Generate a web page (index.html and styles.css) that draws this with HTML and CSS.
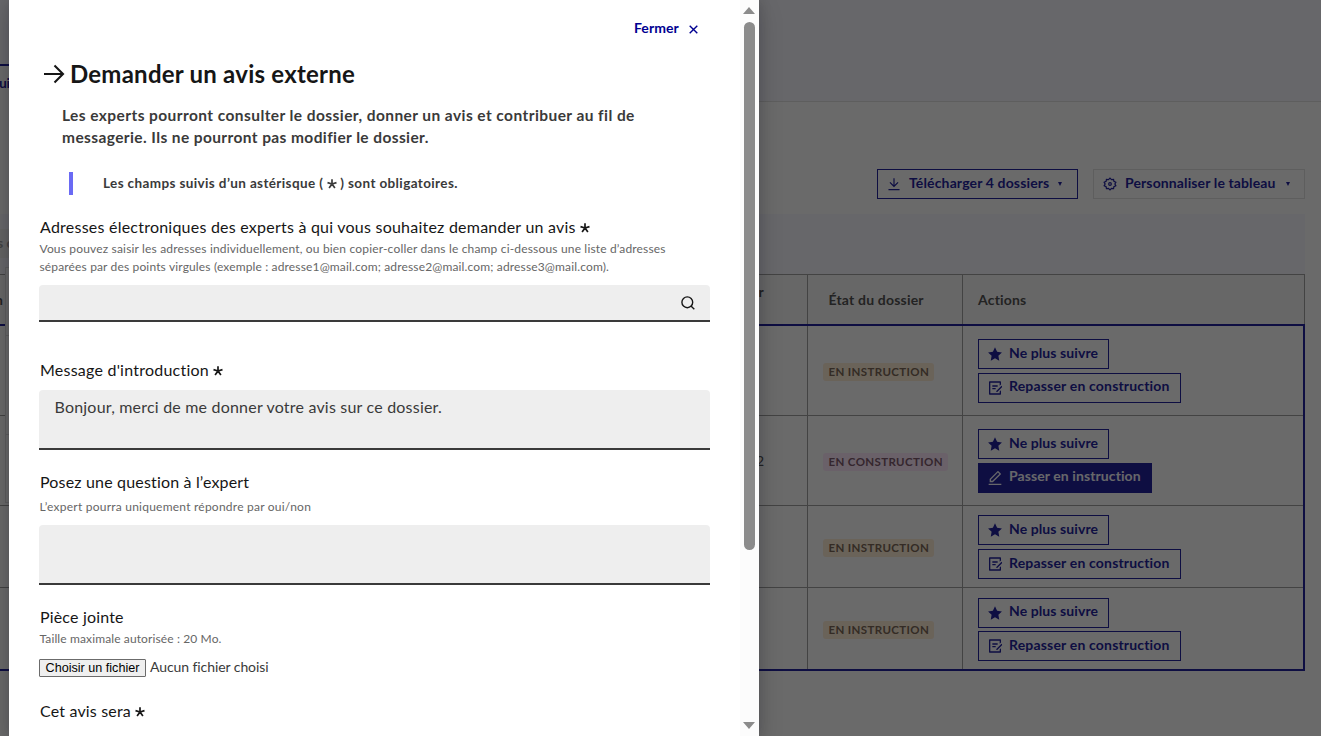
FILE: index.html
```html
<!DOCTYPE html>
<html lang="fr">
<head>
<meta charset="utf-8">
<title>Demander un avis externe</title>
<link rel="stylesheet" href="styles.css">
</head>
<body>
<svg class="defs" width="0" height="0">
  <symbol id="star" viewBox="0 0 24 24"><path d="M12 .6l3.600 7.600 8.300 1.100-6.100 5.800 1.500 8.300-7.300-4-7.300 4 1.500-8.300L.1 9.300l8.300-1.100z"/></symbol>
  <symbol id="draft" viewBox="1.500 1.500 21 21"><path d="M20 2a1 1 0 0 1 1 1v3.800l-2 2V4H5v16h14v-2.800l2-2V21a1 1 0 0 1-1 1H4a1 1 0 0 1-1-1V3a1 1 0 0 1 1-1zm1.800 6.800 1.400 1.400-7.800 7.800H14v-1.400zM13 12v2H8v-2zm3-4v2H8V8z"/></symbol>
  <symbol id="pencil" viewBox="1.500 1.500 21 21"><path d="M15.700 1.700a1 1 0 0 1 1.400 0l3.500 3.500a1 1 0 0 1 0 1.400L8.800 18.300H4v-4.900zM16.400 3.800 6 14.200v2.100h2.100L18.500 5.900zM2.500 20.500h19v2h-19z"/></symbol>
  <symbol id="asterisk" viewBox="0 0 10 10"><path d="M5 5V.3M5 5l4.500-1.400M5 5l2.900 4.100M5 5L2.100 9.100M5 5L.5 3.600" fill="none" stroke="currentColor" stroke-width="1.700"/></symbol>
</svg>

<div class="page">
  <header class="banner"><div class="tab">ui</div></header>
  <div class="toolbar">
    <button class="btn btn-tool">
      <svg class="ico" viewBox="0 0 24 24"><path d="M2.500 20.500h19v2h-19zM13 13.600l5.200-5.200 1.500 1.500L12 17.600 4.300 9.900l1.500-1.500 5.200 5.200V2h2z"/></svg>
      <span>Télécharger 4 dossiers</span><i class="caret"></i>
    </button>
    <button class="btn btn-tool btn-light">
      <svg class="ico" viewBox="0 0 24 24"><path d="M12 2l2.600 2.500 3.500-.5.600 3.500 3.300 1.600L20.400 12l1.600 2.900-3.300 1.600-.6 3.500-3.500-.5L12 22l-2.600-2.500-3.500.5-.6-3.500L2 14.900 3.600 12 2 9.100l3.300-1.600L5.900 4l3.500.5z" fill="none" stroke="currentColor" stroke-width="2.100"/><circle cx="12" cy="12" r="2.300" fill="none" stroke="currentColor" stroke-width="2"/></svg>
      <span>Personnaliser le tableau</span><i class="caret"></i>
    </button>
  </div>
  <div class="filters"><span class="tag">s c</span></div>
  <div class="table">
    <div class="row head">
      <div class="cell first"><span>n</span><span>r</span></div>
      <div class="cell state">État du dossier</div>
      <div class="cell">Actions</div>
    </div>
    <div class="rows">
      <div class="row r1">
        <div class="cell first"></div>
        <div class="cell"><span class="badge">EN INSTRUCTION</span></div>
        <div class="cell actions">
          <button class="btn"><svg class="ico"><use href="#star"/></svg><span>Ne plus suivre</span></button>
          <button class="btn b-long raised"><svg class="ico"><use href="#draft"/></svg><span>Repasser en construction</span></button>
        </div>
      </div>
      <div class="row r2">
        <div class="cell first"><span></span><span>2</span></div>
        <div class="cell"><span class="badge pink">EN CONSTRUCTION</span></div>
        <div class="cell actions">
          <button class="btn"><svg class="ico"><use href="#star"/></svg><span>Ne plus suivre</span></button>
          <button class="btn b-primary raised"><svg class="ico"><use href="#pencil"/></svg><span>Passer en instruction</span></button>
        </div>
      </div>
      <div class="row r3">
        <div class="cell first"></div>
        <div class="cell"><span class="badge">EN INSTRUCTION</span></div>
        <div class="cell actions">
          <button class="btn"><svg class="ico"><use href="#star"/></svg><span>Ne plus suivre</span></button>
          <button class="btn b-long"><svg class="ico"><use href="#draft"/></svg><span>Repasser en construction</span></button>
        </div>
      </div>
      <div class="row r4">
        <div class="cell first"></div>
        <div class="cell"><span class="badge">EN INSTRUCTION</span></div>
        <div class="cell actions">
          <button class="btn raised"><svg class="ico"><use href="#star"/></svg><span>Ne plus suivre</span></button>
          <button class="btn b-long"><svg class="ico"><use href="#draft"/></svg><span>Repasser en construction</span></button>
        </div>
      </div>
    </div>
  </div>
  <div class="popover"><i></i><i></i></div>
</div>

<div class="overlay">
  <section class="modal">
    <div class="content">
      <div class="close"><span>Fermer</span><svg width="9" height="9" viewBox="0 0 9 9"><path d="M.7.700l7.600 7.600M8.300.700L.7 8.300" stroke="currentColor" stroke-width="1.400"/></svg></div>
      <h1 class="title"><svg width="21" height="20" viewBox="0 0 21 20"><path d="M0 10h19M10.500 1.500l8.500 8.500-8.500 8.500" fill="none" stroke="currentColor" stroke-width="2.100"/></svg><span>Demander un avis externe</span></h1>
      <p class="lead">Les experts pourront consulter le dossier, donner un avis et contribuer au fil de<br><span class="lead-end">messagerie. Ils ne pourront pas modifier le dossier.</span></p>
      <p class="notice"><span>Les champs suivis d’un astérisque (</span><svg class="ast"><use href="#asterisk"/></svg><span>) sont obligatoires.</span></p>
      <div class="label"><span>Adresses électroniques des experts à qui vous souhaitez demander un avis</span><svg class="ast"><use href="#asterisk"/></svg></div>
      <p class="hint">Vous pouvez saisir les adresses individuellement, ou bien copier-coller dans le champ ci-dessous une liste d’adresses<br><span class="hint-end">séparées par des points virgules (exemple : adresse1@mail.com; adresse2@mail.com; adresse3@mail.com).</span></p>
      <div class="field search"><svg width="14" height="14" viewBox="0 0 14 14"><circle cx="6.300" cy="6.300" r="5.400" fill="none" stroke="currentColor" stroke-width="1.400"/><path d="M10 10l3.300 3.300" stroke="currentColor" stroke-width="1.400"/></svg></div>
      <div class="label l2"><span>Message d'introduction</span><svg class="ast"><use href="#asterisk"/></svg></div>
      <div class="field area">Bonjour, merci de me donner votre avis sur ce dossier.</div>
      <div class="label l3"><span>Posez une question à l’expert</span></div>
      <p class="hint h3">L’expert pourra uniquement répondre par oui/non</p>
      <div class="field area a3"></div>
      <div class="label l4"><span>Pièce jointe</span></div>
      <p class="hint h4">Taille maximale autorisée : 20 Mo.</p>
      <div class="file"><button>Choisir un fichier</button><span>Aucun fichier choisi</span></div>
      <div class="label l5"><span>Cet avis sera</span><svg class="ast"><use href="#asterisk"/></svg></div>
    </div>
    <div class="scrollbar"><i class="up"></i><i class="thumb"></i><i class="down"></i></div>
  </section>
</div>
</body>
</html>
```
FILE: styles.css
```css
* { box-sizing: border-box; }
body { margin: 0; height: 736px; overflow: hidden; background: #fff; color: #3a3a3a; font: 14px/22px Lato, "Open Sans", sans-serif; }
p, h1 { margin: 0; }
.defs { position: absolute; }
button { font: inherit; }

.page { height: 736px; }
.banner { height: 102px; background: #f5f5fe; border-bottom: 1px solid #ddd; padding-top: 64px; }
.tab { width: 60px; height: 38px; background: #fff; border-top: 2px solid #000091; color: #000091; font-weight: 700; padding-top: 6px; letter-spacing: -.3px; text-indent: -1px; }
.toolbar { display: flex; justify-content: flex-end; gap: 15px; padding: 67px 16px 15px 0; }
.btn { display: flex; align-items: center; width: 131px; height: 30px; margin: 0; padding: 0 0 2px 9px; border: 1px solid #000091; background: none; color: #000091; font-weight: 700; letter-spacing: .09px; white-space: nowrap; }
.ico { width: 14px; height: 14px; margin: 2px 7.500px 0 0; fill: currentColor; flex: none; }
.actions .ico { margin-left: -.5px; }
.btn-tool { width: 201px; letter-spacing: .14px; }
.btn-tool .ico { margin-right: 8px; }
.btn-light { width: 212px; border-color: #ddd; letter-spacing: .12px; }
.caret { margin: 1px 0 0 9px; border: 2.500px solid transparent; border-top: 4px solid #000091; border-bottom: 0; }
.btn-light .caret { margin-left: 10px; }
.filters { height: 60px; margin-right: 16px; background: #f5f5fe; padding-top: 15px; }
.tag { display: block; width: 60px; height: 29px; background: #eee; color: #929292; font-weight: 700; padding-top: 3px; text-indent: -3px; }

.table { margin-right: 16px; }
.row { display: grid; grid-template-columns: 807px 155px 1fr; }
.cell { display: flex; align-items: center; border-left: 1px solid #929292; padding-left: 15px; }
.cell.first { border: 0; justify-content: space-between; padding: 0 43px 0 0; }
.head { height: 50px; background: #f6f6f6; border: 1px solid #929292; border-width: 1px 1px 0 0; font-weight: 700; letter-spacing: .19px; }
.head .state { padding-left: 20.500px; }
.head .first span { margin-left: -5px; }
.head .first span + span { padding-bottom: 16px; }
.rows { height: 347px; border: 2px solid #000091; border-left: 0; }
.rows .row + .row { border-top: 1px solid #929292; }
.r1 { height: 89px; }
.r2 { height: 90px; }
.r3 { height: 82px; }
.r4 { height: 82px; }
.actions { flex-direction: column; align-items: flex-start; gap: 4px; padding-top: 13px; }
.r3 .actions { padding-top: 9px; }
.r4 .actions { padding-top: 10px; gap: 3px; }
.b-long { width: 203px; letter-spacing: .175px; }
.b-primary { width: 174px; background: #000091; color: #f5f5fe; }
.raised span { margin-bottom: 2px; }
.badge { display: block; height: 18px; padding: 0 5px 0 5.500px; border-radius: 3px; background: #feebd0; color: #695240; font: 700 11.500px/18px Lato, sans-serif; letter-spacing: .36px; margin-top: 3px; }
.badge.pink { background: #fee7fc; color: #6e445a; }
.popover { position: absolute; left: 5px; top: 267px; width: 60px; height: 236px; background: #fff; border: 1px solid #ddd; }
.popover i { display: block; height: 68px; border-bottom: 1px solid #ddd; }
.popover i + i { height: 99px; }

.overlay { position: absolute; inset: 0; background: rgba(22, 22, 22, .64); overflow: hidden; }
.modal { display: flex; width: 750px; height: 736px; margin-left: 9px; background: #fff; color: #161616; box-shadow: 0 8px 24px rgba(0, 0, 18, .16), 0 0 12px rgba(0, 0, 18, .16); overflow: hidden; }
.content { width: 731px; padding: 0 30px; white-space: nowrap; }
.close { display: flex; align-items: center; gap: 10px; height: 55px; padding-left: 595px; color: #000091; font-weight: 700; letter-spacing: .08px; }
.close svg { margin-top: 3px; }
.title { display: flex; align-items: center; gap: 5px; height: 32px; margin-top: 3px; padding-left: 5px; font-size: 24px; line-height: 32px; letter-spacing: .23px; }
.lead { padding-left: 23px; margin-top: 14px; font-size: 15.500px; font-weight: 700; letter-spacing: .425px; color: #3a3a3a; }
.lead-end { letter-spacing: .395px; }
.notice { display: flex; align-items: center; height: 23px; margin: 24px 0 20px 30px; border-left: 4px solid #6a6af4; padding: 0 0 1px 30px; font-size: 13.500px; font-weight: 700; letter-spacing: .38px; color: #3a3a3a; }
.ast { width: 10px; height: 10px; margin: 2px 3px 0 4px; flex: none; }
.notice .ast { margin-top: 1px; }
.label { display: flex; align-items: center; height: 24px; padding-left: 1px; font-size: 16px; line-height: 24px; letter-spacing: .23px; }
.l5, .l4, .l3 { letter-spacing: .17px; }
.hint { margin-top: 1px; padding-left: .5px; font-size: 12px; line-height: 18px; letter-spacing: .17px; color: #666; }
.hint-end { letter-spacing: .15px; }
.field { width: 671px; background: #eee; border-bottom: 2px solid #3a3a3a; border-radius: 4px 4px 0 0; }
.search { display: flex; align-items: center; justify-content: flex-end; height: 37px; margin-top: 9px; padding: 1px 15px 0 0; }
.l2 { margin-top: 36px; }
.area { height: 60px; margin-top: 8px; padding: 5px 15px 5px 15.500px; font-size: 16px; line-height: 24px; letter-spacing: .2px; color: #3a3a3a; }
.l3 { margin-top: 20px; }
.h3 { margin-top: 4px; letter-spacing: .23px; }
.h4 { letter-spacing: .12px; }
.a3 { margin-top: 9px; }
.l4 { margin-top: 20px; }
.file { display: flex; align-items: center; gap: 4px; height: 18px; margin: 11px 0 22px; font-size: 14px; letter-spacing: -.08px; color: #3a3a3a; }
.file span { margin-bottom: 2px; }
.file button { width: 107px; height: 18px; padding: 0; border: 1px solid #6b6b6b; border-radius: 1px; background: #efefef; color: #000; font: 12.600px/15px "Liberation Sans", Arial, sans-serif; letter-spacing: 0; }
.scrollbar { position: relative; width: 19px; background: #fcfcfc; }
.up, .down, .thumb { position: absolute; left: 3px; }
.up { top: 7px; border: 6.500px solid transparent; border-bottom: 7px solid #8b8b8b; border-top: 0; }
.down { top: 722px; border: 6.500px solid transparent; border-top: 7px solid #8b8b8b; border-bottom: 0; }
.thumb { left: 4px; top: 22px; width: 11px; height: 528px; border-radius: 6px; background: #8b8b8b; }
```
